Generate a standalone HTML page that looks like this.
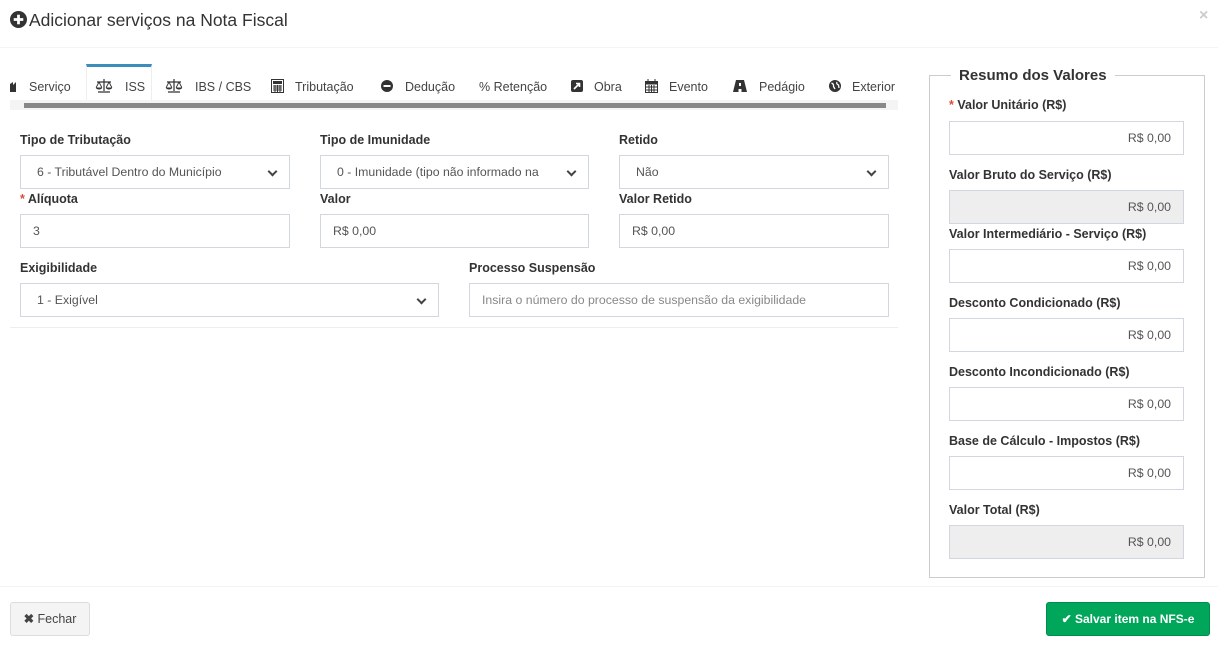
<!DOCTYPE html>
<html><head><meta charset="utf-8"><style>
*{box-sizing:border-box;margin:0;padding:0}
body{width:1218px;height:645px;background:#fff;font-family:"Liberation Sans",sans-serif;color:#333;position:relative;overflow:hidden}
.a{position:absolute;white-space:nowrap}
.t{font-size:12.5px;color:#444;top:80px}
.lbl{font-size:12.5px;font-weight:bold;color:#333}
.req{color:#dd4b39}
.inp{position:absolute;height:34px;border:1px solid #d2d6de;background:#fff;font-size:12.3px;color:#555;line-height:33px;padding-left:12px;overflow:hidden}
.sel{padding-left:16px;padding-right:30px}
.sel:after{content:"";position:absolute;right:13px;top:12px;width:5px;height:5px;border-right:2px solid #444;border-bottom:2px solid #444;transform:rotate(45deg)}
.r{text-align:right;padding-right:12px;padding-left:0}
.dis{background:#eee}
</style></head><body>
<svg class="a" style="left:10px;top:11px" width="17" height="17" viewBox="0 0 16 16"><circle cx="8" cy="8" r="8" fill="#333"/><rect x="3.5" y="6.7" width="9" height="2.6" fill="#fff"/><rect x="6.7" y="3.5" width="2.6" height="9" fill="#fff"/></svg>
<div class="a" style="left:29px;top:10px;font-size:17.5px;color:#333">Adicionar serviços na Nota Fiscal</div>
<div class="a" style="left:1199px;top:7px;font-size:16px;color:#ccc;font-weight:bold">×</div>
<div class="a" style="left:0;top:47px;width:1218px;height:1px;background:#f4f4f4"></div>

<div class="a" style="left:86px;top:64px;width:66px;height:40px;border:1px solid #eee;border-top:3px solid #3c8dbc;border-bottom:none"></div>
<div class="a" style="left:10px;top:100px;width:888px;height:10px;background:#f4f4f4"></div>
<div class="a" style="left:24px;top:103px;width:862px;height:5px;background:#888"></div>

<svg class="a" style="left:10px;top:82px" width="9" height="10"><path d="M0 2 L3 0 V3 L6 0 V10 H0Z" fill="#333"/></svg>
<div class="a t" style="left:29px">Serviço</div>
<svg class="a" style="left:95px;top:79px" width="18" height="14" viewBox="0 0 18 14"><path d="M9 0v12M3 13h12M2 3h14M9 2.5" stroke="#333" stroke-width="1.2" fill="none"/><path d="M4 3L1.2 8.5M4 3L6.8 8.5M14 3L11.2 8.5M14 3L16.8 8.5" stroke="#333" stroke-width="0.9" fill="none"/><path d="M0.8 8.5h6.4a3.2 2 0 0 1-6.4 0zM10.8 8.5h6.4a3.2 2 0 0 1-6.4 0z" fill="#333"/></svg>
<div class="a t" style="left:125px">ISS</div>
<svg class="a" style="left:165px;top:79px" width="18" height="14" viewBox="0 0 18 14"><path d="M9 0v12M3 13h12M2 3h14" stroke="#333" stroke-width="1.2" fill="none"/><path d="M4 3L1.2 8.5M4 3L6.8 8.5M14 3L11.2 8.5M14 3L16.8 8.5" stroke="#333" stroke-width="0.9" fill="none"/><path d="M0.8 8.5h6.4a3.2 2 0 0 1-6.4 0zM10.8 8.5h6.4a3.2 2 0 0 1-6.4 0z" fill="#333"/></svg>
<div class="a t" style="left:195px">IBS / CBS</div>
<svg class="a" style="left:271px;top:79px" width="13" height="14" viewBox="0 0 13 14"><rect x="0.5" y="0.5" width="12" height="13" fill="none" stroke="#333"/><rect x="2" y="2" width="9" height="3" fill="#333"/><path d="M2 7h9M2 9h9M2 11h9M4 6v7M6.5 6v7M9 6v7" stroke="#333"/></svg>
<div class="a t" style="left:295px">Tributação</div>
<svg class="a" style="left:381px;top:80px" width="12" height="12"><circle cx="6" cy="6" r="6" fill="#333"/><rect x="2.5" y="5" width="7" height="2" fill="#fff"/></svg>
<div class="a t" style="left:405px">Dedução</div>
<div class="a t" style="left:479px">% Retenção</div>
<svg class="a" style="left:571px;top:80px" width="12" height="12"><rect width="12" height="12" rx="2" fill="#333"/><path d="M3 9L8 4M5 3.5H8.5V7" stroke="#fff" stroke-width="1.6" fill="none"/></svg>
<div class="a t" style="left:594px">Obra</div>
<svg class="a" style="left:645px;top:79px" width="13" height="14"><rect x="0.5" y="2.5" width="12" height="11" fill="none" stroke="#333"/><rect x="0.5" y="2.5" width="12" height="3" fill="#333"/><path d="M3 0v4M10 0v4M1 8h11M1 11h11M4 6v7M6.5 6v7M9 6v7" stroke="#333"/></svg>
<div class="a t" style="left:669px">Evento</div>
<svg class="a" style="left:733px;top:80px" width="14" height="12"><path d="M3 0H11L14 12H8.5V9H5.5V12H0Z" fill="#333"/><rect x="6" y="3" width="2" height="3" fill="#fff"/></svg>
<div class="a t" style="left:759px">Pedágio</div>
<svg class="a" style="left:829px;top:80px" width="12" height="12"><circle cx="6" cy="6" r="6" fill="#333"/><path d="M2.5 3Q5 4 4.5 6.5L6 9M8 2Q7 4 9.5 5L10 8" stroke="#fff" stroke-width="1.3" fill="none"/></svg>
<div class="a t" style="left:852px">Exterior</div>

<div class="a lbl" style="left:20px;top:133px">Tipo de Tributação</div>
<div class="a lbl" style="left:320px;top:133px">Tipo de Imunidade</div>
<div class="a lbl" style="left:619px;top:133px">Retido</div>
<div class="inp sel" style="left:20px;top:155px;width:270px">6 - Tributável Dentro do Município</div>
<div class="inp sel" style="left:320px;top:155px;width:269px">0 - Imunidade (tipo não informado na nota</div>
<div class="inp sel" style="left:619px;top:155px;width:270px">Não</div>
<div class="a lbl" style="left:20px;top:192px"><span class="req">*</span> Alíquota</div>
<div class="a lbl" style="left:320px;top:192px">Valor</div>
<div class="a lbl" style="left:619px;top:192px">Valor Retido</div>
<div class="inp" style="left:20px;top:214px;width:270px">3</div>
<div class="inp" style="left:320px;top:214px;width:269px">R$ 0,00</div>
<div class="inp" style="left:619px;top:214px;width:270px">R$ 0,00</div>
<div class="a lbl" style="left:20px;top:261px">Exigibilidade</div>
<div class="a lbl" style="left:469px;top:261px">Processo Suspensão</div>
<div class="inp sel" style="left:20px;top:283px;width:419px">1 - Exigível</div>
<div class="inp" style="left:469px;top:283px;width:420px;color:#888">Insira o número do processo de suspensão da exigibilidade</div>
<div class="a" style="left:10px;top:327px;width:888px;height:1px;background:#eee"></div>

<div class="a" style="left:929px;top:75px;width:276px;height:503px;border:1px solid #ccc"></div>
<div class="a" style="left:951px;top:67px;padding:0 8px;background:#fff;font-size:15px;font-weight:bold;color:#333">Resumo dos Valores</div>
<div class="a lbl" style="left:949px;top:98px"><span class="req">*</span> Valor Unitário (R$)</div>
<div class="inp r" style="left:949px;top:121px;width:235px">R$ 0,00</div>
<div class="a lbl" style="left:949px;top:168px">Valor Bruto do Serviço (R$)</div>
<div class="inp r dis" style="left:949px;top:190px;width:235px">R$ 0,00</div>
<div class="a lbl" style="left:949px;top:227px">Valor Intermediário - Serviço (R$)</div>
<div class="inp r" style="left:949px;top:249px;width:235px">R$ 0,00</div>
<div class="a lbl" style="left:949px;top:296px">Desconto Condicionado (R$)</div>
<div class="inp r" style="left:949px;top:318px;width:235px">R$ 0,00</div>
<div class="a lbl" style="left:949px;top:365px">Desconto Incondicionado (R$)</div>
<div class="inp r" style="left:949px;top:387px;width:235px">R$ 0,00</div>
<div class="a lbl" style="left:949px;top:434px">Base de Cálculo - Impostos (R$)</div>
<div class="inp r" style="left:949px;top:456px;width:235px">R$ 0,00</div>
<div class="a lbl" style="left:949px;top:503px">Valor Total (R$)</div>
<div class="inp r dis" style="left:949px;top:525px;width:235px">R$ 0,00</div>

<div class="a" style="left:0;top:586px;width:1218px;height:1px;background:#f4f4f4"></div>
<div class="a" style="left:10px;top:602px;width:80px;height:34px;background:#f4f4f4;border:1px solid #ddd;border-radius:3px;font-size:12.5px;line-height:33px;text-align:center;color:#444"><b>✖</b> Fechar</div>
<div class="a" style="left:1046px;top:602px;width:164px;height:34px;background:#00a65a;border:1px solid #008d4c;border-radius:3px;font-size:12px;font-weight:bold;line-height:33px;text-align:center;color:#fff">✔ Salvar item na NFS-e</div>
</body></html>
